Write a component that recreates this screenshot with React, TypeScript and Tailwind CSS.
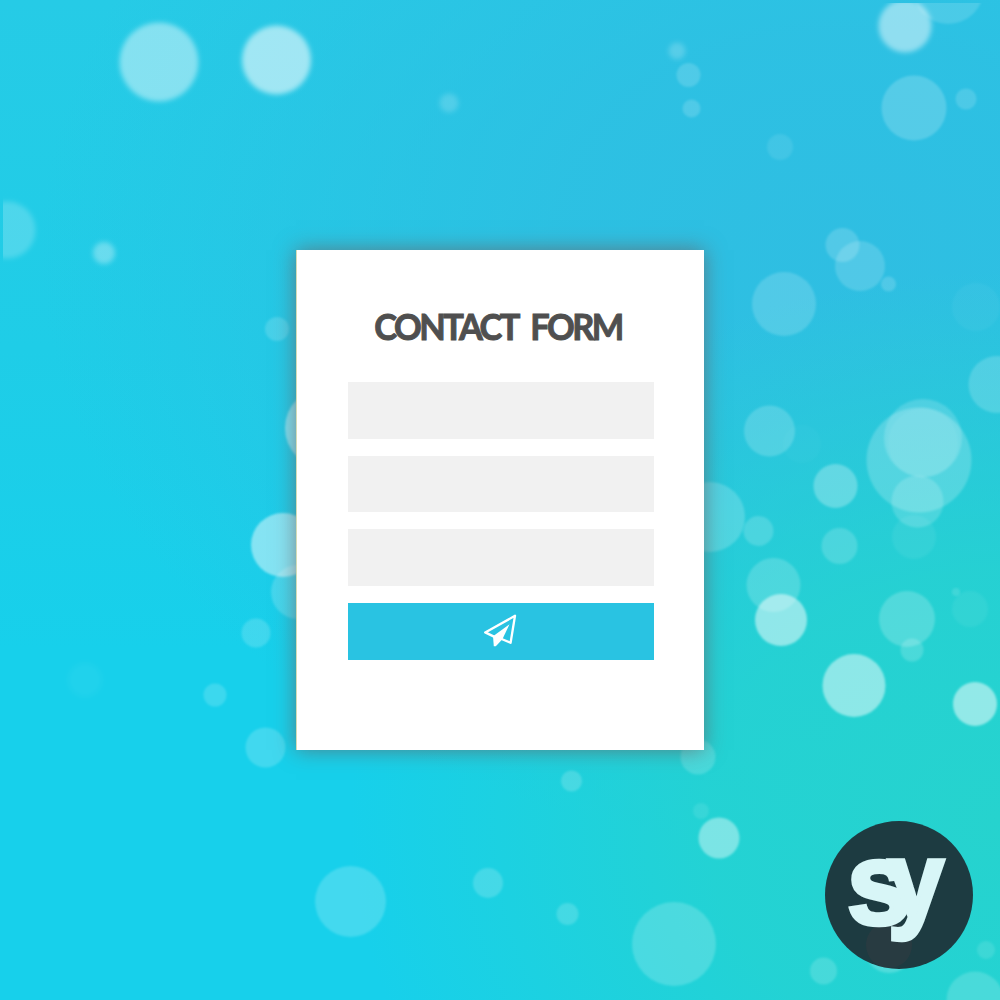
import React from "react";

type Bubble = { x: number; y: number; r: number; o: number; soft?: boolean };

const bubbles: Bubble[] = [
  { x: 159, y: 62, r: 39.5, o: 0.44, soft: true },
  { x: 276.5, y: 60, r: 34.5, o: 0.56, soft: true },
  { x: 449, y: 103, r: 9.5, o: 0.18, soft: true },
  { x: 104, y: 253, r: 11, o: 0.32, soft: true },
  { x: 277, y: 329, r: 12, o: 0.16 },
  { x: 325, y: 428, r: 40, o: 0.4 },
  { x: 283, y: 545, r: 32, o: 0.46 },
  { x: 298, y: 592, r: 27, o: 0.18 },
  { x: 256, y: 633, r: 14.5, o: 0.17 },
  { x: 85, y: 680, r: 17, o: 0.04, soft: true },
  { x: 215, y: 695, r: 11.5, o: 0.16 },
  { x: 265.5, y: 747.5, r: 20, o: 0.18 },
  { x: 350.5, y: 901.5, r: 35.5, o: 0.19 },
  { x: 488, y: 883, r: 15, o: 0.18 },
  { x: 571.5, y: 781, r: 10.5, o: 0.18 },
  { x: 567.5, y: 914, r: 11, o: 0.17 },
  { x: 674, y: 944, r: 42, o: 0.19 },
  { x: 698, y: 757, r: 17.5, o: 0.17 },
  { x: 701, y: 811, r: 8, o: 0.09 },
  { x: 719, y: 838, r: 20.5, o: 0.4 },
  { x: 677, y: 51, r: 8.5, o: 0.2, soft: true },
  { x: 688.5, y: 75, r: 12, o: 0.16 },
  { x: 691.5, y: 108.5, r: 9, o: 0.16 },
  { x: 780, y: 147, r: 13, o: 0.09 },
  { x: 914, y: 108, r: 32.5, o: 0.19 },
  { x: 966, y: 99, r: 10.5, o: 0.15 },
  { x: 842.5, y: 245, r: 17, o: 0.17 },
  { x: 860, y: 266, r: 25, o: 0.16 },
  { x: 888.5, y: 284, r: 7.5, o: 0.16 },
  { x: 784, y: 304, r: 32, o: 0.17 },
  { x: 976, y: 307, r: 24, o: 0.04 },
  { x: 997, y: 384.5, r: 28.5, o: 0.18 },
  { x: 769.5, y: 431, r: 25.5, o: 0.18 },
  { x: 802, y: 444, r: 19, o: 0.02 },
  { x: 835.5, y: 486, r: 22, o: 0.27 },
  { x: 919, y: 460, r: 52.5, o: 0.2 },
  { x: 923, y: 438, r: 39, o: 0.17 },
  { x: 923, y: 443, r: 35, o: 0.05 },
  { x: 917.5, y: 501.5, r: 26, o: 0.17 },
  { x: 710, y: 517, r: 35, o: 0.19 },
  { x: 758.5, y: 531, r: 15, o: 0.17 },
  { x: 839.5, y: 546, r: 18, o: 0.17 },
  { x: 914, y: 537, r: 22, o: 0.06 },
  { x: 773.5, y: 585, r: 27, o: 0.18 },
  { x: 781, y: 620, r: 26, o: 0.49 },
  { x: 907, y: 619, r: 28, o: 0.2 },
  { x: 912, y: 650, r: 11.5, o: 0.17 },
  { x: 956, y: 592, r: 4, o: 0.12 },
  { x: 970, y: 609, r: 18, o: 0.055 },
  { x: 854, y: 685.5, r: 31.5, o: 0.48 },
  { x: 975, y: 704, r: 22, o: 0.5 },
  { x: 889, y: 949, r: 24, o: 0.2 },
  { x: 823.5, y: 971, r: 13.5, o: 0.16 },
  { x: 986, y: 950, r: 9, o: 0.11 },
  { x: 975, y: 1000, r: 28.5, o: 0.17 },
];

function Backdrop() {
  return (
    <svg
      viewBox="0 0 1000 1000"
      className="pointer-events-none absolute inset-0 h-full w-full"
      aria-hidden="true"
    >
      <defs>
        <filter id="soft" x="-25%" y="-25%" width="150%" height="150%">
          <feGaussianBlur stdDeviation="2.4" />
        </filter>
        <filter id="edge" x="-10%" y="-10%" width="120%" height="120%">
          <feGaussianBlur stdDeviation="0.8" />
        </filter>
        <clipPath id="top">
          <rect x="0" y="3" width="1000" height="100" />
        </clipPath>
        <clipPath id="left">
          <rect x="3" y="180" width="60" height="100" />
        </clipPath>
      </defs>
      {bubbles.map((b, i) => (
        <circle
          key={i}
          cx={b.x}
          cy={b.y}
          r={b.r}
          fill="#fff"
          fillOpacity={b.o}
          filter={b.soft ? "url(#soft)" : "url(#edge)"}
        />
      ))}
      <g clipPath="url(#top)">
        <circle cx="948" cy="-12" r="36" fill="#fff" fillOpacity=".14" filter="url(#edge)" />
        <circle cx="905" cy="26" r="26.5" fill="#fff" fillOpacity=".47" filter="url(#soft)" />
      </g>
      <g clipPath="url(#left)">
        <circle cx="7" cy="230" r="28.5" fill="#fff" fillOpacity=".2" filter="url(#soft)" />
      </g>
    </svg>
  );
}

function PlaneIcon() {
  return (
    <svg viewBox="0 0 34 34" className="h-[34px] w-[34px]" aria-hidden="true">
      <path
        d="M31 1.8 1.2 18.4 10 22.6M31 1.8 26.6 28.8 17.6 25"
        fill="none"
        stroke="#fff"
        strokeWidth="2.3"
        strokeLinejoin="round"
        strokeLinecap="round"
      />
      <path d="M25.5 10.2 9 22.2 9.8 32.2 11.8 32.2 18.4 25.2Z" fill="#fff" />
    </svg>
  );
}

function Logo() {
  return (
    <div className="absolute top-[821px] left-[825px] h-[148px] w-[148px] rounded-full bg-[#1d3b41]">
      <svg viewBox="0 0 148 148" className="h-full w-full" role="img" aria-label="sy">
        <circle cx="64" cy="124" r="23" fill="#693e43" fillOpacity=".15" />
        <g
          fontFamily="'Liberation Sans', Arial, sans-serif"
          fontWeight="700"
          fill="#d8f6f7"
          stroke="#d8f6f7"
          strokeWidth="4.5"
        >
          <text transform="translate(22 103) scale(.99 1)" fontSize="116">
            s
          </text>
          <text transform="translate(63 97) scale(.93 1)" fontSize="108">
            y
          </text>
        </g>
      </svg>
    </div>
  );
}

export default function App() {
  return (
    <main className="relative flex h-[1000px] w-[1000px] items-center justify-center overflow-hidden bg-[#16d0ec] bg-[radial-gradient(ellipse_65%_55%_at_100%_82%,#26d3ce_0%,#26d3cecc_45%,#26d3ce00_100%),radial-gradient(ellipse_80%_60%_at_84%_25%,#2fbee2_0%,#2fbee2d0_35%,#2fbee200_100%),linear-gradient(180deg,#26cbe6_0%,#1fcde7_35%,#17d0eb_65%)]">
      <Backdrop />
      <section className="relative flex h-[500px] w-[408px] flex-col border-l border-[#d5dcb5] bg-white pt-[54px] pr-[50px] pl-[51px] shadow-[0_0_20px_rgba(110,85,85,0.65)]">
        <h1 className="h-[44px] origin-center -translate-x-[3px] scale-x-[0.93] text-center font-['Lato'] text-[37px] leading-[44px] font-bold tracking-[-2.7px] whitespace-nowrap text-[#4f4f4f] [-webkit-text-stroke:1px_#4f4f4f] [word-spacing:8px]">
          CONTACT FORM
        </h1>
        <form className="mt-[34px] flex flex-col gap-[17px]" onSubmit={(e) => e.preventDefault()}>
          <input aria-label="Name" className="h-[56.5px] w-full bg-[#f1f1f1] px-4 outline-none" />
          <input aria-label="Email" className="h-[56.5px] w-full bg-[#f1f1f1] px-4 outline-none" />
          <input aria-label="Message" className="h-[56.5px] w-full bg-[#f1f1f1] px-4 outline-none" />
          <button
            aria-label="Send"
            className="flex h-[57px] w-full items-center justify-center bg-[#29c3e2]"
          >
            <PlaneIcon />
          </button>
        </form>
      </section>
      <Logo />
    </main>
  );
}
